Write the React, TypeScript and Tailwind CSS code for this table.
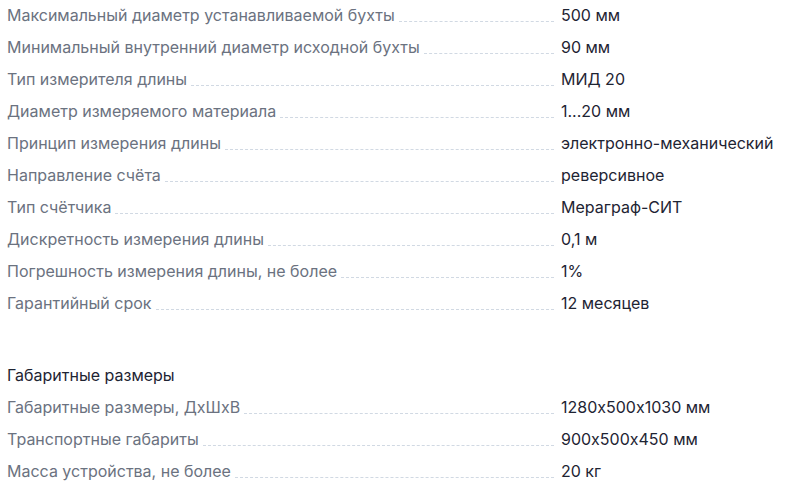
const main = [
  ['Максимальный диаметр устанавливаемой бухты', '500 мм'],
  ['Минимальный внутренний диаметр исходной бухты', '90 мм'],
  ['Тип измерителя длины', 'МИД 20'],
  ['Диаметр измеряемого материала', '1...20 мм'],
  ['Принцип измерения длины', 'электронно-механический'],
  ['Направление счёта', 'реверсивное'],
  ['Тип счётчика', 'Мераграф-СИТ'],
  ['Дискретность измерения длины', '0,1 м'],
  ['Погрешность измерения длины, не более', '1%'],
  ['Гарантийный срок', '12 месяцев'],
];

const dims = [
  ['Габаритные размеры, ДхШхВ', '1280x500x1030 мм'],
  ['Транспортные габариты', '900x500x450 мм'],
  ['Масса устройства, не более', '20 кг'],
];

function Row({ label, value }: { label: string; value: string }) {
  return (
    <div className="flex h-8 items-center pb-0.5">
      <div className="flex w-[547px] items-end">
        <span className="whitespace-nowrap text-[#6b7280]">{label}</span>
        <span className="ml-1 mb-[5px] flex-1 border-b border-dashed border-[#d1d9e3]" />
      </div>
      <div className="pl-[7px] whitespace-nowrap text-[#1e2433]">{value}</div>
    </div>
  );
}

export default function App() {
  return (
    <div
      className="bg-white px-[7px] text-base leading-6"
      style={{ fontFamily: 'Inter, "Noto Sans", sans-serif', fontFeatureSettings: '"calt" 0' }}
    >
      <div>
        {main.map(([l, v]) => (
          <Row key={l} label={l} value={v} />
        ))}
      </div>
      <div className="mt-10">
        <div className="flex h-8 items-center pb-0.5 text-[#1e2433]">Габаритные размеры</div>
        {dims.map(([l, v]) => (
          <Row key={l} label={l} value={v} />
        ))}
      </div>
    </div>
  );
}
